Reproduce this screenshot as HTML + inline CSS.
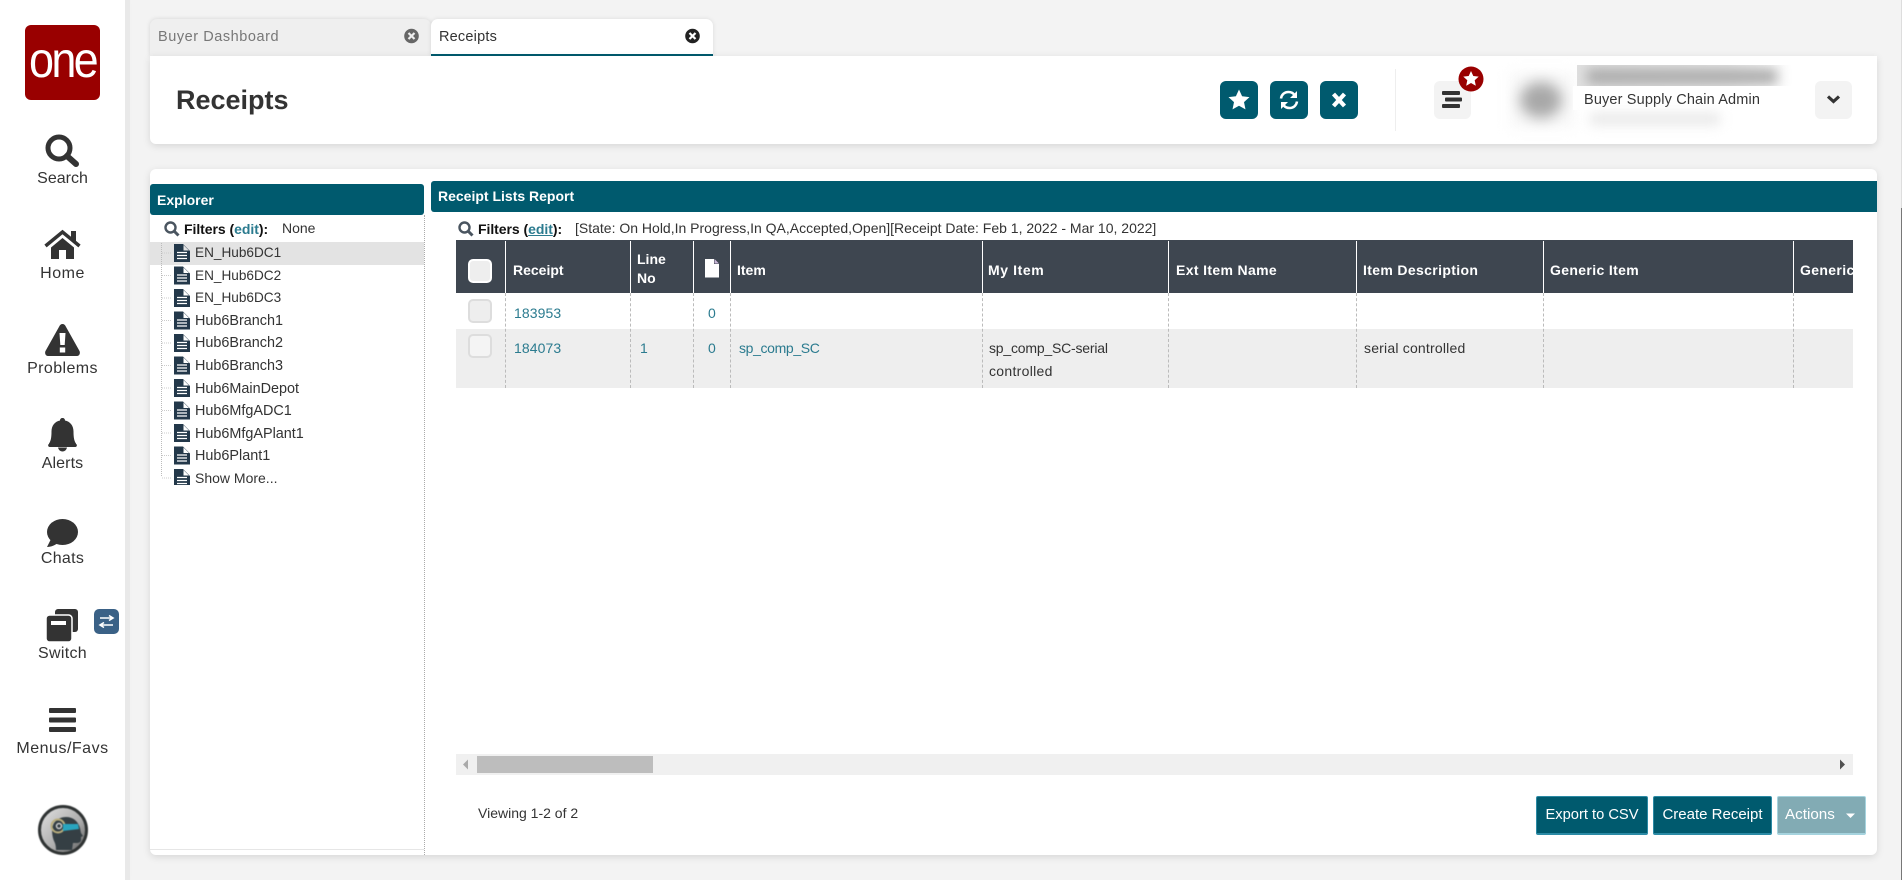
<!DOCTYPE html>
<html><head><meta charset="utf-8"><title>Receipts</title>
<style>
html,body{margin:0;padding:0;width:1902px;height:880px;overflow:hidden;background:#f3f3f3;font-family:"Liberation Sans",sans-serif;color:#333}
.a{position:absolute}
.t{position:absolute;white-space:nowrap;font-size:14px;line-height:20px;height:20px}
.nav{position:absolute;left:0;width:125px;text-align:center;font-size:16px;line-height:20px;color:#333}
.h{color:#fff;font-weight:bold;font-size:14px}
.th{letter-spacing:.35px}
.l{color:#2b7b8f}
.v{position:absolute;width:0;border-left:1px dashed #bbb}
.hs{position:absolute;width:1px;background:#fff;top:241px;height:52px}
.tree{color:#333;font-size:14.4px}
.en{font-size:13.6px}
.btn{position:absolute;top:796px;height:36px;line-height:36px;background:#005a6e;color:#fff;border:1px solid #2b8aa5;border-bottom-width:2px;border-radius:2px;text-align:center;font-size:14.7px;box-sizing:content-box}
.cb{position:absolute;left:468px;width:20px;height:20px;background:#eee;border:2px solid #ddd;border-radius:5px}
.sq{position:absolute;top:81px;width:38px;height:38px;border-radius:6px;background:#005a6e}
</style></head><body>

<!-- sidebar -->
<div class="a" style="left:0;top:0;width:125px;height:880px;background:#fff;box-shadow:0 0 6px rgba(0,0,0,.18)"></div>
<div class="a" style="left:125px;top:0;width:5px;height:880px;background:#e9e9e9"></div>
<div class="a" style="left:25px;top:25px;width:75px;height:75px;border-radius:6px;background:#990000"></div>
<div class="t" style="left:25px;top:34px;width:75px;height:52px;line-height:52px;text-align:center;color:#fff;font-size:50px;letter-spacing:-3px;transform:scaleX(.9)">one</div>

<svg class="a" style="left:0;top:0" width="125" height="880" fill="#333">
<circle cx="59" cy="148" r="11" fill="none" stroke="#333" stroke-width="5"/>
<path d="M67 156l9 8" stroke="#333" stroke-width="6" stroke-linecap="round" fill="none"/>
<path d="M45.500 246 62.500 232 79.500 246" fill="none" stroke="#333" stroke-width="3.500"/>
<path d="M71 231h5v11l-5-4zM62.500 238 74 247.500V259H66V250H59V259H51V247.500z"/>
<path d="M62.500 324c1.500 0 2.500 1 3 2L79.500 351c1 2 0 5-2.500 5H48c-2.500 0-3.500-3-2.500-5L59.500 326c.5-1 1.500-2 3-2z"/>
<path d="M59.500 333h6l-.8 12h-4.400zM59.800 347.500h5.400v5h-5.400z" fill="#fff"/>
<path d="M62.500 418c1.500 0 2.500 1 2.500 2.500 5 1 8.500 5 8.500 11 0 7 1 10 2.500 12 0 0 0 1.500-1 1.500H50c-1 0-1-1.500-1-1.500 1.500-2 2.500-5 2.500-12 0-6 3.500-10 8.500-11 0-1.500 1-2.500 2.500-2.500z"/>
<path d="M49 444h27c1 0 1.500 2.500-.5 3H49.500c-2-.5-1.500-3-.5-3z"/>
<path d="M58 447.500h9c-.5 2.500-2.500 4-4.500 4s-4-1.500-4.500-4z"/>
<ellipse cx="62.500" cy="532" rx="15.500" ry="13"/>
<path d="M51 539 47 547c4 0 9-2 12-5z"/>
<rect x="55" y="609" width="23" height="23" rx="3"/>
<rect x="46" y="615" width="26" height="27" rx="3.500" stroke="#fff" stroke-width="1.500"/>
<rect x="51" y="621" width="15" height="4" fill="#fff"/>
<rect x="49" y="708" width="27" height="5" rx="1"/>
<rect x="49" y="717.500" width="27" height="5" rx="1"/>
<rect x="49" y="727" width="27" height="5" rx="1"/>
<rect x="94" y="609" width="25" height="25" rx="5" fill="#3a6186"/>
<path d="M100 618h12M109 615.500l4 2.500-4 2.500M113 625h-12M104 622.500l-4 2.500 4 2.500" stroke="#fff" stroke-width="1.600" fill="none"/>
<defs><linearGradient id="g" x1="0" y1="0" x2="1" y2="1"><stop offset="0" stop-color="#e4e4e4"/><stop offset=".6" stop-color="#aaa"/><stop offset="1" stop-color="#555"/></linearGradient></defs>
<g style="filter:blur(.5px)">
<circle cx="63" cy="830" r="23.500" fill="url(#g)" stroke="#2f3333" stroke-width="3"/>
<path d="M56 850c0-5-1-7-2-9-2-5-3-13 0-18 3-4 7-6 12-6 7 0 12 4 14 11l1 5 2 3-2 1v3c0 2-2 3-5 3h-3l-1 7z" fill="#353f44"/>
<circle cx="58" cy="826" r="6.500" fill="none" stroke="#b9ad7c" stroke-width="2"/>
<circle cx="59" cy="826" r="2.500" fill="none" stroke="#ccc" stroke-width="1.500"/>
<path d="M63 824h15l1 5-16 2z" fill="#29a5bf"/>
</g>
</svg>
<div class="nav" style="top:169px">Search</div>
<div class="nav" style="top:264px;letter-spacing:.5px">Home</div>
<div class="nav" style="top:359px;letter-spacing:.4px">Problems</div>
<div class="nav" style="top:454px;letter-spacing:.1px">Alerts</div>
<div class="nav" style="top:549px;letter-spacing:.3px">Chats</div>
<div class="nav" style="top:644px;letter-spacing:.3px">Switch</div>
<div class="nav" style="top:739px;letter-spacing:.5px">Menus/Favs</div>

<!-- tabs -->
<div class="a" style="left:150px;top:19px;width:281px;height:37px;background:#efefef;border-radius:7px 7px 0 0;box-shadow:0 0 5px rgba(0,0,0,.12)"></div>
<div class="a" style="left:431px;top:19px;width:282px;height:35px;background:#fff;border-bottom:2px solid #005a6e;border-radius:7px 7px 0 0;box-shadow:0 0 5px rgba(0,0,0,.1)"></div>
<div class="t" style="left:158px;top:27px;color:#777;font-size:14.5px;letter-spacing:.55px">Buyer Dashboard</div>
<div class="t" style="left:439px;top:27px;font-size:14.5px;letter-spacing:.2px">Receipts</div>
<svg class="a" style="left:400px;top:28px" width="310" height="18">
<circle cx="11.500" cy="8" r="7.300" fill="#666"/><path d="M8.500 5l6 6M14.500 5l-6 6" stroke="#eee" stroke-width="2.200"/>
<circle cx="292.500" cy="8" r="7.300" fill="#222"/><path d="M289.500 5l6 6M295.500 5l-6 6" stroke="#fff" stroke-width="2.200"/>
</svg>

<!-- header card -->
<div class="a" style="left:150px;top:56px;width:1727px;height:88px;background:#fff;border-radius:0 0 6px 6px;box-shadow:0 2px 8px rgba(0,0,0,.12)"></div>
<div class="t" style="left:176px;top:84px;height:32px;line-height:32px;font-size:27px;font-weight:bold;color:#333">Receipts</div>
<div class="sq" style="left:1220px"></div><div class="sq" style="left:1270px"></div><div class="sq" style="left:1320px"></div>
<svg class="a" style="left:1220px;top:81px" width="140" height="38">
<path d="M19 8.500l3.100 6.700 7.400.9-5.500 5 1.500 7.300L19 24.800l-6.500 3.600 1.500-7.300-5.500-5 7.400-.9z" fill="#fff"/>
<path d="M61 17.500c.5-3.700 3.300-6.500 7.500-6.500 2.800 0 4.800 1.200 6 3M77 20.500c-.5 3.700-3.300 6.500-7.500 6.500-2.800 0-4.800-1.200-6-3" fill="none" stroke="#fff" stroke-width="2.500"/>
<path d="M77 10v7h-7zM61 28v-7h7z" fill="#fff"/>
<path d="M113.500 13l11 12M124.500 13l-11 12" stroke="#fff" stroke-width="4.200"/>
</svg>
<div class="a" style="left:1395px;top:69px;width:1px;height:62px;background:#eee"></div>
<div class="a" style="left:1434px;top:81px;width:37px;height:38px;border-radius:6px;background:#f3f3f3"></div>
<svg class="a" style="left:1434px;top:64px" width="52" height="50">
<rect x="8" y="27" width="18" height="4" rx="1" fill="#333"/><rect x="11" y="33.500" width="17" height="4" rx="1" fill="#333"/><rect x="8" y="40" width="18" height="4" rx="1" fill="#333"/>
<circle cx="37" cy="15" r="12.500" fill="#990000"/>
<path d="M37 7l2.300 5 5.400.6-4 3.700 1.100 5.400-4.800-2.700-4.800 2.700 1.100-5.400-4-3.700 5.400-.6z" fill="#fff"/>
</svg>
<!-- blurred -->
<div class="a" style="left:1510px;top:72px;width:64px;height:56px;background:#f8f8f8;filter:blur(6px)"></div>
<div class="a" style="left:1520px;top:82px;width:42px;height:36px;border-radius:50%;background:#a8a8a8;filter:blur(7px)"></div>
<div class="a" style="left:1577px;top:65px;width:215px;height:21px;background:linear-gradient(90deg,#e0e0e0,#e8e8e8 70%,#fff);overflow:hidden"><div class="a" style="left:10px;top:4px;width:190px;height:15px;background:#aaa;filter:blur(6px)"></div></div>
<div class="a" style="left:1573px;top:86px;width:180px;height:24px;background:#fff"></div>
<div class="t" style="left:1584px;top:90px;font-size:14.5px;letter-spacing:.15px">Buyer Supply Chain Admin</div>
<div class="a" style="left:1590px;top:113px;width:130px;height:12px;background:#e8e8e8;filter:blur(6px)"></div>
<div class="a" style="left:1815px;top:81px;width:37px;height:38px;border-radius:6px;background:#f3f3f3"></div>
<svg class="a" style="left:1825px;top:93px" width="18" height="14"><path d="M3 3.500l5.500 5 5.500-5" fill="none" stroke="#333" stroke-width="3.200"/></svg>

<!-- main card -->
<div class="a" style="left:150px;top:169px;width:1727px;height:686px;background:#fff;border-radius:6px;box-shadow:0 2px 8px rgba(0,0,0,.12)"></div>
<div class="a" style="left:150px;top:184px;width:274px;height:31px;background:#005a6e;border-radius:3px"></div>
<div class="t h" style="left:157px;top:190px">Explorer</div>
<div class="a" style="left:431px;top:181px;width:1446px;height:31px;background:#005a6e;border-radius:3px 0 0 3px"></div>
<div class="t h" style="left:438px;top:186px">Receipt Lists Report</div>
<div class="a" style="left:424px;top:215px;height:640px;border-left:1px dotted #aaa"></div>
<div class="a" style="left:150px;top:849px;width:274px;height:1px;background:#e6e6e6"></div>

<!-- explorer -->
<svg class="a" style="left:163px;top:220px" width="18" height="18"><circle cx="7.500" cy="7.500" r="5" fill="none" stroke="#4a5560" stroke-width="2.400"/><path d="M11 11l4.500 4.500" stroke="#4a5560" stroke-width="3"/></svg>
<div class="t" style="left:184px;top:219px;font-weight:bold;color:#111;letter-spacing:-.05px">Filters (<span class="l">edit</span>):</div>
<div class="t" style="left:282px;top:218px;font-size:14px">None</div>
<div class="a" style="left:150px;top:242px;width:274px;height:23px;background:#e3e3e3"></div>
<div class="a" style="left:161px;top:243px;height:233px;border-left:1px dotted #bbb"></div>
<svg class="a" style="left:161px;top:240px" width="32" height="245" fill="#23384a">
<defs><g id="d"><path d="M0 0h9l7 7v11H0zM9.500 1v5.500H15z" fill-rule="evenodd"/><path d="M3 8.500h10M3 11.500h10M3 14.500h10" stroke="#fff" stroke-width="1.300"/><path d="M-12 9h10" stroke="#ccc" stroke-dasharray="1 1"/></g></defs>
<use href="#d" x="13" y="4"/><use href="#d" x="13" y="26.500"/><use href="#d" x="13" y="49"/><use href="#d" x="13" y="71.500"/><use href="#d" x="13" y="94"/><use href="#d" x="13" y="116.500"/><use href="#d" x="13" y="139"/><use href="#d" x="13" y="161.500"/><use href="#d" x="13" y="184"/><use href="#d" x="13" y="206.500"/><use href="#d" x="13" y="229"/>
</svg>
<div class="t tree en" style="left:195px;top:243px">EN_Hub6DC1</div>
<div class="t tree en" style="left:195px;top:266px">EN_Hub6DC2</div>
<div class="t tree en" style="left:195px;top:288px">EN_Hub6DC3</div>
<div class="t tree" style="left:195px;top:311px">Hub6Branch1</div>
<div class="t tree" style="left:195px;top:333px">Hub6Branch2</div>
<div class="t tree" style="left:195px;top:356px">Hub6Branch3</div>
<div class="t tree" style="left:195px;top:378.500px">Hub6MainDepot</div>
<div class="t tree" style="left:195px;top:401px">Hub6MfgADC1</div>
<div class="t tree" style="left:195px;top:423.500px">Hub6MfgAPlant1</div>
<div class="t tree" style="left:195px;top:446px">Hub6Plant1</div>
<div class="t tree" style="left:195px;top:468px;font-size:14px">Show More...</div>

<!-- report filters -->
<svg class="a" style="left:457px;top:220px" width="18" height="18"><circle cx="7.500" cy="7.500" r="5" fill="none" stroke="#4a5560" stroke-width="2.400"/><path d="M11 11l4.500 4.500" stroke="#4a5560" stroke-width="3"/></svg>
<div class="t" style="left:478px;top:219px;font-weight:bold;color:#111;letter-spacing:-.05px">Filters (<span class="l" style="text-decoration:underline">edit</span>):</div>
<div class="t" style="left:575px;top:218px;font-size:14px">[State: On Hold,In Progress,In QA,Accepted,Open][Receipt Date: Feb 1, 2022 - Mar 10, 2022]</div>

<!-- table -->
<div class="a" style="left:456px;top:240px;width:1397px;height:53px;background:#3e4650"></div>
<div class="a" style="left:456px;top:329px;width:1397px;height:59px;background:#eee"></div>
<div class="hs" style="left:505px"></div><div class="hs" style="left:630px"></div><div class="hs" style="left:693px"></div><div class="hs" style="left:730px"></div><div class="hs" style="left:982px"></div><div class="hs" style="left:1168px"></div><div class="hs" style="left:1356px"></div><div class="hs" style="left:1543px"></div><div class="hs" style="left:1793px"></div>
<div class="v" style="left:505px;top:293px;height:95px"></div><div class="v" style="left:630px;top:293px;height:95px"></div><div class="v" style="left:693px;top:293px;height:95px"></div><div class="v" style="left:730px;top:293px;height:95px"></div><div class="v" style="left:982px;top:293px;height:95px"></div><div class="v" style="left:1168px;top:293px;height:95px"></div><div class="v" style="left:1356px;top:293px;height:95px"></div><div class="v" style="left:1543px;top:293px;height:95px"></div><div class="v" style="left:1793px;top:293px;height:95px"></div>
<div class="cb" style="top:259px;border-color:#fff"></div>
<div class="cb" style="top:299px"></div>
<div class="cb" style="top:334px;background:#f4f4f4"></div>
<div class="t h" style="left:513px;top:260px">Receipt</div>
<div class="t h" style="left:637px;top:249px">Line</div>
<div class="t h" style="left:637px;top:268px">No</div>
<svg class="a" style="left:705px;top:259px" width="15" height="19"><path d="M0 0h9v5h5v13.500H0z" fill="#fff"/><path d="M9.500 0 14 4.500H9.500z" fill="#c9b6d8"/></svg>
<div class="t h" style="left:737px;top:260px">Item</div>
<div class="t h th" style="left:988px;top:260px;letter-spacing:.6px">My Item</div>
<div class="t h th" style="left:1176px;top:260px">Ext Item Name</div>
<div class="t h th" style="left:1363px;top:260px">Item Description</div>
<div class="t h th" style="left:1550px;top:260px">Generic Item</div>
<div class="a" style="left:1800px;top:260px;width:53px;height:20px;overflow:hidden"><div class="t h th" style="left:0;top:0">Generic Item Description</div></div>
<div class="t l" style="left:514px;top:303px;letter-spacing:.1px">183953</div>
<div class="t l" style="left:708px;top:303px">0</div>
<div class="t l" style="left:514px;top:338px;letter-spacing:.1px">184073</div>
<div class="t l" style="left:640px;top:338px">1</div>
<div class="t l" style="left:708px;top:338px">0</div>
<div class="t l" style="left:739px;top:338px;letter-spacing:-.35px">sp_comp_SC</div>
<div class="t" style="left:989px;top:338px;letter-spacing:-.2px">sp_comp_SC-serial</div>
<div class="t" style="left:989px;top:361px;letter-spacing:.3px">controlled</div>
<div class="t" style="left:1364px;top:338px;letter-spacing:.2px">serial controlled</div>

<!-- scrollbar -->
<div class="a" style="left:456px;top:754px;width:1397px;height:21px;background:#f0f0f0"></div>
<div class="a" style="left:477px;top:756px;width:176px;height:17px;background:#bdbdbd"></div>
<svg class="a" style="left:456px;top:754px" width="1397" height="21"><path d="M12 5.500v10l-5-5z" fill="#aaa"/><path d="M1384 5.500v10l5-5z" fill="#505050"/></svg>

<!-- footer -->
<div class="t" style="left:478px;top:803px">Viewing 1-2 of 2</div>
<div class="btn" style="left:1536px;width:110px">Export to CSV</div>
<div class="btn" style="left:1653px;width:117px;font-size:15px">Create Receipt</div>
<div class="btn" style="left:1777px;width:87px;background:#82abb4;border-color:#a5d3de;text-align:left;text-indent:7px;font-size:15.2px">Actions</div>
<svg class="a" style="left:1845px;top:812px" width="12" height="8"><path d="M1 1.500h9l-4.500 4.500z" fill="#fff"/></svg>

<div class="a" style="left:1901px;top:0;width:1px;height:208px;background:#ddd"></div>
<div class="a" style="left:1901px;top:208px;width:1px;height:672px;background:#777"></div>
</body></html>
